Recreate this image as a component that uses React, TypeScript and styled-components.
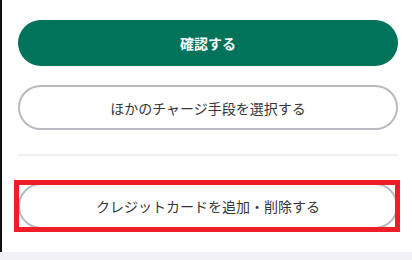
import * as React from 'react';
import styled, { createGlobalStyle } from 'styled-components';

const GlobalStyle = createGlobalStyle`
    html, body {
        margin: 0;
        padding: 0;
        background: #fff;
    }
    body {
        font-family: 'Noto Sans CJK JP', 'Noto Sans', sans-serif;
        -webkit-font-smoothing: antialiased;
    }
`;

const Panel = styled.div`
    display: flex;
    flex-direction: column;
    background: #fff;
    border-left: 2px solid #111;
    padding: 20px 14px 23px 16px;
`;

const Button = styled.button<{ primary?: boolean; tall?: boolean }>`
    display: flex;
    align-items: center;
    justify-content: center;
    width: 100%;
    height: ${props => props.primary || props.tall ? '46px' : '45px'};
    margin: 0;
    padding: 0;
    border-radius: 23px;
    border: ${props => props.primary ? '0' : '2px solid #b9b9c1'};
    background: ${props => props.primary ? '#00735a' : '#fff'};
    color: ${props => props.primary ? '#fff' : '#363636'};
    font-family: 'Noto Sans CJK JP', 'Noto Sans', sans-serif;
    font-size: 14px;
    font-weight: ${props => props.primary ? 700 : 400};
    cursor: pointer;
`;

const SecondaryRow = styled.div`
    margin-top: 19px;
`;

const Divider = styled.hr`
    margin: 24px 0 0;
    border: 0;
    height: 2px;
    background: #efeff2;
`;

const HighlightRow = styled.div`
    position: relative;
    margin-top: 27px;
`;

// red annotation frame drawn over the button
const HighlightFrame = styled.div`
    position: absolute;
    top: -3px;
    bottom: -3px;
    left: -4px;
    right: -2px;
    border: 5px solid #ee1d26;
    pointer-events: none;
`;

const Footer = styled.div`
    height: 8px;
    background: #f2f2f6;
`;

export default function App() {
    return (
        <>
            <GlobalStyle />
            <Panel>
                <Button primary>確認する</Button>
                <SecondaryRow>
                    <Button>ほかのチャージ手段を選択する</Button>
                </SecondaryRow>
                <Divider />
                <HighlightRow>
                    <Button tall>クレジットカードを追加・削除する</Button>
                    <HighlightFrame />
                </HighlightRow>
            </Panel>
            <Footer />
        </>
    );
}
